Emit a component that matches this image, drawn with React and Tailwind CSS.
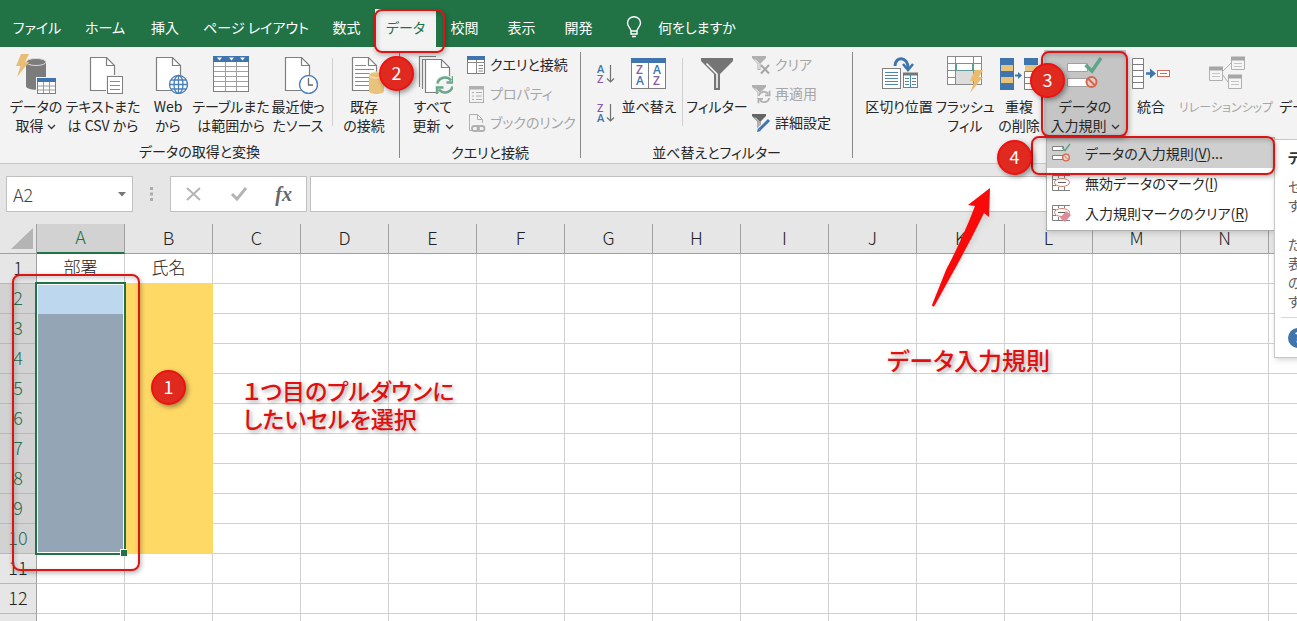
import React, { useState } from 'react';
import clsx from 'clsx';

const TABS = [
  { name: 'ファイル', width: 'w-[74px]' },
  { name: 'ホーム', width: 'w-[62px]' },
  { name: '挿入', width: 'w-[58px]' },
  { name: 'ページ レイアウト', width: 'w-[124px]' },
  { name: '数式', width: 'w-[57px]' },
  { name: 'データ', width: 'w-[61px]' },
  { name: '校閲', width: 'w-[57px]' },
  { name: '表示', width: 'w-[57px]' },
  { name: '開発', width: 'w-[57px]' },
];

const COLUMNS = 'ABCDEFGHIJKLMNO'.split('');
const ROWS = Array.from({ length: 13 }, (_, i) => i + 1);
const HEADINGS = { A: '部署', B: '氏名' };

/* ---------- icons ---------- */

const Icon = ({ size = 40, children }) => (
  <svg width={size} height={size} viewBox={`0 0 ${size} ${size}`} fill="none" className="shrink-0" aria-hidden="true">
    {children}
  </svg>
);

const Doc = ({ x = 0, y = 0 }) => (
  <g transform={`translate(${x} ${y})`} stroke="#7f7f7f" strokeWidth="1.2">
    <path d="M.5 .5H16.500L24.500 8.500V33.500H.5Z" fill="#fff" />
    <path d="M16.500 .5V8.500H24.500" />
  </g>
);

const GetDataIcon = () => (
  <Icon>
    <path d="M10 8V32C10 37 30 37 30 32V8" fill="#7c7c7c" />
    <ellipse cx="20" cy="8" rx="10" ry="3.500" fill="#7c7c7c" stroke="#d9d9d9" />
    <path d="M5 0H13L9 8H13L1 23L4.500 12H0Z" fill="#e8bd78" />
    <rect x="20" y="23" width="20" height="17" fill="#f3f3f3" />
    <rect x="21.500" y="24.500" width="18" height="15" fill="#fff" stroke="#7f7f7f" />
    <rect x="21" y="24" width="19" height="4" fill="#3f74ad" />
    <path d="M22 32H39M22 36H39M27.500 28V39M33.500 28V39" stroke="#9a9a9a" />
  </Icon>
);

const CsvIcon = () => (
  <Icon>
    <Doc x={7} y={3} />
    <rect x="23" y="21" width="17" height="19" fill="#f3f3f3" />
    <rect x="24.500" y="22.500" width="15" height="17" fill="#fff" stroke="#7f7f7f" />
    <path d="M27 27.500H37M27 31.500H37M27 35.500H37" stroke="#8a8a8a" />
  </Icon>
);

const WebIcon = () => (
  <Icon>
    <Doc x={8} y={3} />
    <g stroke="#4a7fb8" strokeWidth="1.300">
      <circle cx="30.500" cy="30.500" r="9" fill="#fff" />
      <ellipse cx="30.500" cy="30.500" rx="4.500" ry="9" />
      <path d="M30.500 21.500V39.500M21.500 30.500H39.500M23 26H38M23 35H38" />
    </g>
  </Icon>
);

const TableIcon = () => (
  <Icon>
    <rect x="2.500" y="2.500" width="35" height="35" fill="#fff" stroke="#7f7f7f" />
    <rect x="2" y="2" width="36" height="6" fill="#3f74ad" />
    <path d="M6 3.500H11L8.500 6.500ZM18 3.500H23L20.500 6.500ZM29 3.500H34L31.500 6.500Z" fill="#fff" />
    <path d="M3 12.500H37M3 17.500H37M3 22.500H37M3 27.500H37M3 32.500H37M14.500 8V37M25.500 8V37" stroke="#a0a0a0" />
  </Icon>
);

const RecentIcon = () => (
  <Icon>
    <Doc x={7} y={3} />
    <circle cx="30.500" cy="30.500" r="9" fill="#fff" stroke="#4a7fb8" strokeWidth="1.400" />
    <path d="M30.500 24V31H35" stroke="#6a6a6a" strokeWidth="1.300" />
  </Icon>
);

const ExistingIcon = () => (
  <Icon>
    <Doc x={8} y={3} />
    <path d="M11 11.500H22M11 15.500H30M11 19.500H26M11 23.500H25M11 27.500H25M11 31.500H25" stroke="#8a8a8a" />
    <path d="M25 21V37C25 41 40 41 40 37V21" fill="#e8c37c" />
    <ellipse cx="32.500" cy="21" rx="7.500" ry="3" fill="#e8c37c" stroke="#f7e6c4" />
  </Icon>
);

const Cycle = ({ x, y, color, scale = 1 }) => (
  <g transform={`translate(${x} ${y}) scale(${scale})`} stroke={color} strokeWidth="2.500">
    <path d="M-7.500 -1.500A7.500 7 0 0 1 6 -4.500M8 -9V-2.500H1.500" />
    <path d="M7.500 1.500A7.500 7 0 0 1 -6 4.500M-8 9V2.500H-1.500" />
  </g>
);

const RefreshIcon = () => (
  <Icon>
    <path d="M6.500 33V2.500H23M9.500 35V5.500H26" stroke="#7f7f7f" strokeWidth="1.200" />
    <Doc x={12} y={5} />
    <circle cx="32" cy="31" r="10" fill="#f3f3f3" />
    <Cycle x={32} y={31} color="#6ba68d" />
  </Icon>
);

const QueryIcon = () => (
  <Icon size={20}>
    <rect x="1.500" y="1.500" width="17" height="17" fill="#fff" stroke="#7f7f7f" />
    <rect x="1" y="1" width="18" height="4" fill="#3f74ad" />
    <path d="M10.500 5V18M1 7.500H19M12.500 10.500H17M12.500 13.500H17M12.500 16H17" stroke="#8a8a8a" />
  </Icon>
);

const PropertyIcon = () => (
  <Icon size={20}>
    <rect x="3.500" y="2.500" width="14" height="16" stroke="#b0b0b0" />
    <path d="M3 4H18" stroke="#b0b0b0" strokeWidth="3" />
    <path d="M6 8.500H8M6 12H8M6 15.500H8M10 8.500H16M10 12H16M10 15.500H16" stroke="#b0b0b0" />
  </Icon>
);

const LinkIcon = () => (
  <Icon size={20}>
    <path d="M6 17.500H3.500V1.500H11.500L16.500 6.500V10M11.500 1.500V6.500H16.500" stroke="#b0b0b0" />
    <rect x="6" y="13" width="7" height="5" rx="2.500" stroke="#b0b0b0" strokeWidth="1.800" />
    <rect x="11.500" y="13" width="7" height="5" rx="2.500" stroke="#b0b0b0" strokeWidth="1.800" />
  </Icon>
);

const Letter = ({ x, y, size = 11, children }) => (
  <text
    x={x}
    y={y}
    fontSize={size}
    fontFamily="Open Sans, sans-serif"
    fontWeight="600"
    fill={children === 'A' ? '#3f74ad' : '#8a5aa5'}
  >
    {children}
  </text>
);

const SortOrderIcon = ({ top, bottom }) => (
  <Icon size={20}>
    <Letter x={1} y={9}>{top}</Letter>
    <Letter x={1} y={19}>{bottom}</Letter>
    <path d="M14.500 1V18M11 14.500L14.500 18L18 14.500" stroke="#707070" strokeWidth="1.200" />
  </Icon>
);

const SortIcon = () => (
  <Icon>
    <rect x="2.500" y="4.500" width="34" height="30" fill="#fff" stroke="#7f7f7f" />
    <rect x="2" y="4" width="35" height="5" fill="#3f74ad" />
    <path d="M19.500 9V34" stroke="#7f7f7f" />
    <Letter x={7} y={20} size={12}>Z</Letter>
    <Letter x={7} y={31} size={12}>A</Letter>
    <Letter x={24} y={20} size={12}>A</Letter>
    <Letter x={24} y={31} size={12}>Z</Letter>
  </Icon>
);

const FilterIcon = () => (
  <Icon>
    <path d="M4 4H36V7L23 20V36H17V20L4 7Z" fill="#757575" />
    <path d="M20 34V20L9.500 9.500" stroke="#fff" strokeWidth="1.500" />
  </Icon>
);

const Funnel = ({ color }) => (
  <>
    <path d="M1 1H15V3L9.500 8.500V15H6.500V8.500L1 3Z" fill={color} />
    <path d="M8 14V8.500L4 4.500" stroke="#fff" />
  </>
);

const ClearIcon = () => (
  <Icon size={20}>
    <Funnel color="#b0b0b0" />
    <path d="M10 10L18 18.500M18 10L10 18.500" stroke="#a6a6a6" strokeWidth="2" />
  </Icon>
);

const ReapplyIcon = () => (
  <Icon size={20}>
    <Funnel color="#b0b0b0" />
    <circle cx="13" cy="13" r="6.500" fill="#f3f3f3" />
    <Cycle x={13} y={13} scale={0.700} color="#b0b0b0" />
  </Icon>
);

const AdvancedIcon = () => (
  <Icon size={20}>
    <Funnel color="#666" />
    <path d="M18 7L8 17" stroke="#f3f3f3" strokeWidth="5" />
    <path d="M18 7L8.500 16.500" stroke="#3f74ad" strokeWidth="3" />
    <path d="M6 19L7 15L10 18Z" fill="#3f74ad" />
  </Icon>
);

const TextToColumnsIcon = () => (
  <Icon>
    <rect x="3.500" y="14.500" width="18" height="20" fill="#fff" stroke="#7f7f7f" />
    <path d="M6 18.500H19M6 21.500H19M6 24.500H19M6 27.500H19M6 30.500H19" stroke="#4f87a8" />
    <rect x="24.500" y="19.500" width="14" height="14" fill="#fff" stroke="#7f7f7f" />
    <path d="M24 20H39" stroke="#757575" strokeWidth="3" />
    <path d="M31.500 20V33M26 24.500H30M26 27.500H30M26 30.500H30M33 24.500H37M33 27.500H37M33 30.500H37" stroke="#4f87a8" />
    <path d="M16 12C16 2 29 2 29 14" stroke="#3f74ad" strokeWidth="3" />
    <path d="M24 10L29 16L34 10" stroke="#3f74ad" strokeWidth="2.500" />
  </Icon>
);

const FlashFillIcon = () => (
  <Icon>
    <rect x="2.500" y="2.500" width="34" height="28" fill="#fff" stroke="#8a8a8a" />
    <rect x="11" y="17" width="17" height="13" fill="#dcdcdc" />
    <path d="M2 9.500H37M2 16.500H37M2 23.500H11M10.500 2V30M28.500 2V30" stroke="#8a8a8a" />
    <rect x="11.500" y="9.500" width="16" height="7" fill="#fff" stroke="#5e9c95" />
    <path d="M30 16H38L34 23H38L25 39L29.500 27H25Z" fill="#eabc6c" />
  </Icon>
);

const DuplicatesIcon = () => (
  <Icon>
    <rect x="1" y="4" width="14" height="32" fill="#3f74ad" />
    <path d="M2 11H14V17H2ZM2 23H14V29H2Z" fill="#e8c37c" />
    <path d="M16 21.500H20" stroke="#3f74ad" strokeWidth="2" />
    <path d="M19 18L23 21.500L19 25Z" fill="#3f74ad" />
    <rect x="25" y="4" width="14" height="7" fill="#3f74ad" />
    <rect x="26" y="11" width="12" height="6" fill="#e8c37c" />
    <path d="M25.500 17.500H38.500V35.500H25.500ZM25.500 23.500H38.500M25.500 29.500H38.500" fill="#fff" stroke="#7f7f7f" />
  </Icon>
);

const ValidationIcon = () => (
  <Icon>
    <path d="M2.500 9.500H22.500V17.500H2.500ZM2.500 24.500H22.500V32.500H2.500Z" fill="#fff" stroke="#a0a0a0" />
    <path d="M20.500 11L27 17L36 4" stroke="#5fa587" strokeWidth="3.500" />
    <circle cx="26.500" cy="28" r="5" fill="#e3cdc6" stroke="#d4664a" strokeWidth="2" />
    <path d="M23 24.500L30 31.500" stroke="#d4664a" strokeWidth="2" />
  </Icon>
);

const ConsolidateIcon = () => (
  <Icon>
    <path d="M1.500 4.500H12.500V34.500H1.500ZM1.500 10.500H12.500M1.500 16.500H12.500M1.500 22.500H12.500M1.500 28.500H12.500" fill="#fff" stroke="#7f7f7f" />
    <path d="M15 19.500H21" stroke="#3f74ad" strokeWidth="2.500" />
    <path d="M19 14.500L25 19.500L19 24.500Z" fill="#3f74ad" />
    <rect x="26.500" y="16.500" width="12" height="6" fill="#fff" stroke="#cc6f58" />
    <path d="M29 19.500H36" stroke="#cc6f58" />
  </Icon>
);

const RelationIcon = () => (
  <Icon>
    <path d="M16 18L25 9M16 20L22 28" stroke="#b0b0b0" />
    <path d="M3.500 14.500H16.500V26.500H3.500ZM25.500 4.500H38.500V15.500H25.500ZM22.500 22.500H35.500V34.500H22.500Z" fill="#f5f5f5" stroke="#b0b0b0" />
    <path d="M3 14.500H17M25 4.500H39M22 22.500H36" stroke="#a6a6a6" strokeWidth="4" />
    <path d="M6 19.500H14M6 22.500H14M28 9.500H36M28 12.500H36M25 27.500H33M25 30.500H33" stroke="#c4c4c4" />
  </Icon>
);

const SmallValidationIcon = () => (
  <Icon size={20}>
    <path d="M1.500 3.500H12.500V7.500H1.500ZM1.500 12.500H11.500V16.500H1.500Z" fill="#fff" stroke="#808080" />
    <path d="M11 4.500L14 7.500L19 1" stroke="#5fa587" strokeWidth="1.500" />
    <circle cx="15" cy="14.500" r="3.300" fill="#ecd5ce" stroke="#d4664a" strokeWidth="1.300" />
    <path d="M13 12.500L17 16.500" stroke="#d4664a" />
  </Icon>
);

const CircleInvalidIcon = ({ erase }) => (
  <Icon size={20}>
    <path d="M19 2.500H1.500V17.500H19M1.500 6.500H5M1.500 12.500H5M7.500 2V5M13.500 2V5M7.500 14V17M13.500 14V17" stroke="#808080" />
    <ellipse cx="11" cy="9.500" rx="7.500" ry="4" fill="#fff" stroke="#cc8070" />
    <path d="M7 9.500H15" stroke="#606060" />
    {erase && <path d="M15 8L20 12L14 19L9 15Z" fill="#e08a9a" />}
  </Icon>
);

const Chevron = () => (
  <svg width="9" height="6" viewBox="0 0 9 6" fill="none" className="ml-1 inline-block" aria-hidden="true">
    <path d="M1 1L4.500 4.500L8 1" stroke="#333" strokeWidth="1.300" />
  </svg>
);

/* ---------- ribbon ---------- */

const BigButton = ({ icon, lines, width, menu, active, disabled }) => (
  <button
    type="button"
    disabled={disabled}
    className={clsx(
      'flex h-[86px] shrink-0 flex-col items-center gap-[3px] whitespace-nowrap pt-1 leading-[19px]',
      width,
      active && 'bg-[#c5c5c5]',
      disabled && 'text-xs leading-[19px] text-[#a6a6a6]'
    )}
  >
    {icon}
    <span className="flex flex-col items-center">
      {lines.map((line, i) => (
        <span key={line}>
          {line}
          {menu && i === lines.length - 1 && <Chevron />}
        </span>
      ))}
    </span>
  </button>
);

const SmallButton = ({ icon, label, disabled }) => (
  <button
    type="button"
    disabled={disabled}
    className={clsx('flex h-[29px] items-center gap-1 whitespace-nowrap', disabled && 'text-[#a6a6a6]')}
  >
    {icon}
    {label}
  </button>
);

const Group = ({ label, width, children }) => (
  <section className={clsx('flex shrink-0 flex-col pt-[3px]', width)}>
    <div className="flex">{children}</div>
    <p className="mt-[5px] text-center leading-5">{label}</p>
  </section>
);

const GroupLine = () => <div className="mt-[5px] mb-[5px] w-px shrink-0 bg-[#8a8a8a]" />;
const Line = () => <div className="mt-2 h-[68px] w-px shrink-0 bg-[#d0d0d0]" />;

const MENU_ITEMS = [
  { icon: <SmallValidationIcon />, label: 'データの入力規則', keyName: 'V', tail: '...' },
  { icon: <CircleInvalidIcon />, label: '無効データのマーク', keyName: 'I' },
  { icon: <CircleInvalidIcon erase />, label: '入力規則マークのクリア', keyName: 'R' },
];

const ValidationMenu = () => (
  <ul className="absolute top-[87px] left-[2px] z-10 w-[229px] border border-[#b0b0b0] bg-white pb-[2px] shadow-md">
    {MENU_ITEMS.map((item, i) => (
      <li key={item.keyName}>
        <button
          type="button"
          className={clsx('flex h-[30px] w-full items-center gap-[14px] whitespace-nowrap pl-1', i === 0 && 'bg-[#cfcfcf]')}
        >
          {item.icon}
          <span>
            {item.label}(<u className="underline-offset-2">{item.keyName}</u>){item.tail}
          </span>
        </button>
      </li>
    ))}
  </ul>
);

const Tooltip = () => (
  <div
    role="tooltip"
    className="absolute top-[89px] left-[230px] z-10 w-[340px] border border-[#c8c8c8] bg-white text-[#606060] shadow-md"
  >
    <div className="px-[13px] pt-2 pb-[6px] leading-[19px]">
      <p className="mb-[10px] font-bold text-[#333]">データの入力規則</p>
      <p>セルに入力できるデータの種類を制限しま</p>
      <p className="mb-5">す。</p>
      <p>たとえば、選択できる値をリストとして</p>
      <p>表示したり、1000 より大きい数値だけ</p>
      <p>の入力を有効にしたりすることができま</p>
      <p>す。</p>
    </div>
    <div className="mx-[6px] flex items-center gap-2 border-t border-[#d8d8d8] px-[7px] py-[9px]">
      <span className="flex size-5 items-center justify-center rounded-full bg-[#3f74ad] font-bold text-white">?</span>
      詳細情報
    </div>
  </div>
);

const Ribbon = () => (
  <div className="flex h-[117px] border-b border-[#c8c8c8] bg-[#f3f3f3] text-[14px] text-[#262626]">
    <Group label="データの取得と変換" width="w-[399px]">
      <div className="flex pl-1">
        <BigButton icon={<GetDataIcon />} lines={['データの', '取得']} width="w-[64px]" menu />
        <BigButton icon={<CsvIcon />} lines={['テキストまた', 'は CSV から']} width="w-[70px]" />
        <BigButton icon={<WebIcon />} lines={['Web', 'から']} width="w-[60px]" />
        <BigButton icon={<TableIcon />} lines={['テーブルまた', 'は範囲から']} width="w-[66px]" />
        <BigButton icon={<RecentIcon />} lines={['最近使っ', 'たソース']} width="w-[68px]" />
        <Line />
        <BigButton icon={<ExistingIcon />} lines={['既存', 'の接続']} width="w-[62px]" />
      </div>
    </Group>
    <GroupLine />
    <Group label="クエリと接続" width="w-[180px]">
      <BigButton icon={<RefreshIcon />} lines={['すべて', '更新']} width="w-[66px]" menu />
      <div className="flex flex-col">
        <SmallButton icon={<QueryIcon />} label="クエリと接続" />
        <SmallButton icon={<PropertyIcon />} label="プロパティ" disabled />
        <SmallButton icon={<LinkIcon />} label="ブックのリンク" disabled />
      </div>
    </Group>
    <GroupLine />
    <Group label="並べ替えとフィルター" width="w-[271px]">
      <div className="flex flex-col gap-[19px] pt-[14px] pl-[15px]">
        <button type="button" aria-label="昇順"><SortOrderIcon top="A" bottom="Z" /></button>
        <button type="button" aria-label="降順"><SortOrderIcon top="Z" bottom="A" /></button>
      </div>
      <BigButton icon={<SortIcon />} lines={['並べ替え']} width="w-[66px]" />
      <Line />
      <BigButton icon={<FilterIcon />} lines={['フィルター']} width="w-[68px]" />
      <div className="flex flex-col">
        <SmallButton icon={<ClearIcon />} label="クリア" disabled />
        <SmallButton icon={<ReapplyIcon />} label="再適用" disabled />
        <SmallButton icon={<AdvancedIcon />} label="詳細設定" />
      </div>
    </Group>
    <GroupLine />
    <div className="flex pt-[3px] pl-3">
      <BigButton icon={<TextToColumnsIcon />} lines={['区切り位置']} width="w-[68px]" />
      <BigButton icon={<FlashFillIcon />} lines={['フラッシュ', 'フィル']} width="w-[64px]" />
      <BigButton icon={<DuplicatesIcon />} lines={['重複', 'の削除']} width="w-[44px]" />
      <div className="relative ml-[3px]">
        <BigButton icon={<ValidationIcon />} lines={['データの', '入力規則']} width="w-[82px]" menu active />
        <ValidationMenu />
        <Tooltip />
      </div>
      <BigButton icon={<ConsolidateIcon />} lines={['統合']} width="w-[50px]" />
      <BigButton icon={<RelationIcon />} lines={['リレーションシップ']} width="w-[100px]" disabled />
      <BigButton icon={<TableIcon />} lines={['データ モデル', 'の管理']} width="w-[88px]" />
    </div>
  </div>
);

const TabBar = ({ current, onSelect }) => (
  <nav className="flex h-[47px] items-end bg-[#217346] text-[14px] text-white">
    {TABS.map((tab) => (
      <button
        key={tab.name}
        type="button"
        onClick={() => onSelect(tab.name)}
        className={clsx(
          'h-[38px] shrink-0 pb-[2px] whitespace-nowrap',
          tab.width,
          tab.name === current && 'bg-[#f3f3f3] text-[#217346]'
        )}
      >
        {tab.name}
      </button>
    ))}
    <button type="button" className="flex h-[38px] items-center gap-4 pb-[2px] pl-[19px] whitespace-nowrap">
      <svg width="16" height="22" viewBox="0 0 16 22" fill="none" stroke="#fff" strokeWidth="1.400" aria-hidden="true">
        <path d="M5 15C5 12 1.500 11 1.500 7A6.500 6.200 0 0 1 14.500 7C14.500 11 11 12 11 15ZM5 15V18H11V15M6 20.500H10" />
      </svg>
      何をしますか
    </button>
  </nav>
);

/* ---------- formula bar ---------- */

const FormulaBar = () => (
  <div className="flex h-[60px] items-center bg-[#e6e6e6] pl-[6px]">
    <div className="flex h-9 w-[127px] items-center border border-[#c0c0c0] bg-white pr-[6px] pl-[6px]">
      <input
        aria-label="名前ボックス"
        defaultValue="A2"
        className="w-full min-w-0 text-[18px] font-light text-[#444] outline-none"
      />
      <svg width="8" height="5" viewBox="0 0 8 5" className="shrink-0" aria-hidden="true">
        <path d="M0 0H8L4 4.500Z" fill="#777" />
      </svg>
    </div>
    <svg width="37" height="16" viewBox="0 0 37 16" className="shrink-0" aria-hidden="true">
      <path d="M17 1H20V4H17ZM17 6.500H20V9.500H17ZM17 12H20V15H17Z" fill="#ababab" />
    </svg>
    <div className="flex h-9 w-[137px] shrink-0 items-center justify-between border border-[#c0c0c0] bg-white px-[14px]">
      <button type="button" aria-label="キャンセル">
        <svg width="17" height="16" viewBox="0 0 17 16" fill="none" stroke="#b4b4b4" strokeWidth="2" aria-hidden="true">
          <path d="M2 2L15 14M15 2L2 14" />
        </svg>
      </button>
      <button type="button" aria-label="入力">
        <svg width="18" height="16" viewBox="0 0 18 16" fill="none" stroke="#b4b4b4" strokeWidth="3" aria-hidden="true">
          <path d="M2 8L7 13L16 2" />
        </svg>
      </button>
      <button type="button" className="font-['Liberation_Serif',serif] text-[20px] leading-6 font-bold text-[#666] italic">
        fx
      </button>
    </div>
    <input aria-label="数式バー" className="ml-[3px] h-9 min-w-0 flex-1 border border-[#c0c0c0] bg-white px-2 outline-none" />
  </div>
);

/* ---------- sheet ---------- */

const isPicked = (row) => row >= 2 && row <= 10;

const cellColor = (col, row) => {
  if (col === 'B' && row === 1) return 'border-r-[#d0d0d0] border-b-[#ffd966]';
  if (!isPicked(row) || (col !== 'A' && col !== 'B')) return 'border-[#d0d0d0]';
  if (col === 'B') return 'border-[#ffd966] bg-[#ffd966]';
  return row === 2 ? 'border-[#bdd7ee] bg-[#bdd7ee]' : 'border-[#94a5b5] bg-[#94a5b5]';
};

const Sheet = () => (
  <div className="relative">
    <table className="w-[1357px] table-fixed border-separate border-spacing-0 text-center text-[18px] font-light text-[#222]">
      <thead>
        <tr className="h-[30px]">
          <th className="w-[37px] border-r border-b border-[#a0a0a0] bg-[#e6e6e6] p-0" aria-label="すべて選択">
            <svg width="36" height="29" viewBox="0 0 36 29" aria-hidden="true">
              <path d="M33 4V25H11Z" fill="#b4b4b4" />
            </svg>
          </th>
          {COLUMNS.map((col) => (
            <th
              key={col}
              scope="col"
              className={clsx(
                'w-[88px] border-r p-0 pb-1 leading-6 font-light',
                col === 'A'
                  ? 'border-b-2 border-r-[#a0a0a0] border-b-[#217346] bg-[#d2d2d2] text-[#217346]'
                  : 'border-b border-[#a0a0a0] bg-[#e6e6e6]'
              )}
            >
              {col}
            </th>
          ))}
        </tr>
      </thead>
      <tbody>
        {ROWS.map((row) => (
          <tr key={row} className="h-[30px]">
            <th
              scope="row"
              className={clsx(
                'border-r border-b border-r-[#a0a0a0] border-b-[#b8b8b8] p-0 pb-[3px] leading-6 font-light',
                isPicked(row) ? 'bg-[#d2d2d2] text-[#2f6b4a]' : 'bg-[#e6e6e6]'
              )}
            >
              {row}
            </th>
            {COLUMNS.map((col) => (
              <td key={col} className={clsx('border-r border-b p-0 pb-[3px] text-[17px] leading-6', cellColor(col, row))}>
                {row === 1 && HEADINGS[col]}
              </td>
            ))}
          </tr>
        ))}
      </tbody>
    </table>
    {/* selection frame over A2:A10 with its fill handle */}
    <div className="absolute top-[58px] left-[35px] h-[273px] w-[91px] border-2 border-[#217346]">
      <div className="h-full border border-white" />
      <div className="absolute -right-[3px] -bottom-[3px] size-[7px] border-t border-l border-white bg-[#217346]" />
    </div>
  </div>
);

/* ---------- step marks ---------- */

const Frame = ({ place }) => (
  <div
    className={clsx(
      'absolute rounded-lg border-2 border-[#dc1414] shadow-[1px_2px_5px_rgba(0,0,0,0.3),inset_1px_2px_5px_rgba(0,0,0,0.2)]',
      place
    )}
  />
);

const Step = ({ number, place }) => (
  <div
    className={clsx(
      'absolute flex size-[35px] items-center justify-center rounded-full border-2 border-[#f01010] bg-[#e02a20] pb-[2px] text-[18px] text-white shadow-[2px_2px_5px_rgba(0,0,0,0.4)]',
      place
    )}
  >
    {number}
  </div>
);

const Note = ({ place, children }) => (
  <p
    className={clsx(
      'absolute whitespace-nowrap leading-7 font-medium text-[#e01010] [text-shadow:2px_2px_4px_rgba(0,0,0,0.35)]',
      place
    )}
  >
    {children}
  </p>
);

const Marks = () => (
  <div className="pointer-events-none absolute inset-0 z-20">
    <Frame place="left-[12px] top-[274px] h-[297px] w-[128px]" />
    <Frame place="left-[374px] top-[9px] h-[44px] w-[71px]" />
    <Frame place="left-[1041px] top-[51px] h-[86px] w-[87px]" />
    <Frame place="left-[1031px] top-[136px] h-[39px] w-[244px]" />
    <Step number={1} place="left-[151px] top-[370px]" />
    <Step number={2} place="left-[379px] top-[56px]" />
    <Step number={3} place="left-[1030px] top-[63px]" />
    <Step number={4} place="left-[997px] top-[140px]" />
    <svg width="70" height="130" viewBox="0 0 70 130" className="absolute top-[182px] left-[926px] drop-shadow-md" aria-hidden="true">
      <path d="M64 6L42 23L49 24C40 48 26 77 20 88L6 123Q7 126 9 123C24 96 42 64 58 31L63 35Z" fill="#f80a0a" />
    </svg>
    <Note place="left-[243px] top-[376px] text-[23px]">
      １つ目のプルダウンに
      <br />
      したいセルを選択
    </Note>
    <Note place="left-[887px] top-[346px] text-[24px]">データ入力規則</Note>
  </div>
);

const App = () => {
  const [tab, setTab] = useState('データ');

  return (
    <div className="relative h-screen overflow-hidden bg-white font-['Noto_Sans_CJK_JP',sans-serif] [font-feature-settings:'palt']">
      <TabBar current={tab} onSelect={setTab} />
      <Ribbon />
      <FormulaBar />
      <Sheet />
      <Marks />
    </div>
  );
};

export default App;
